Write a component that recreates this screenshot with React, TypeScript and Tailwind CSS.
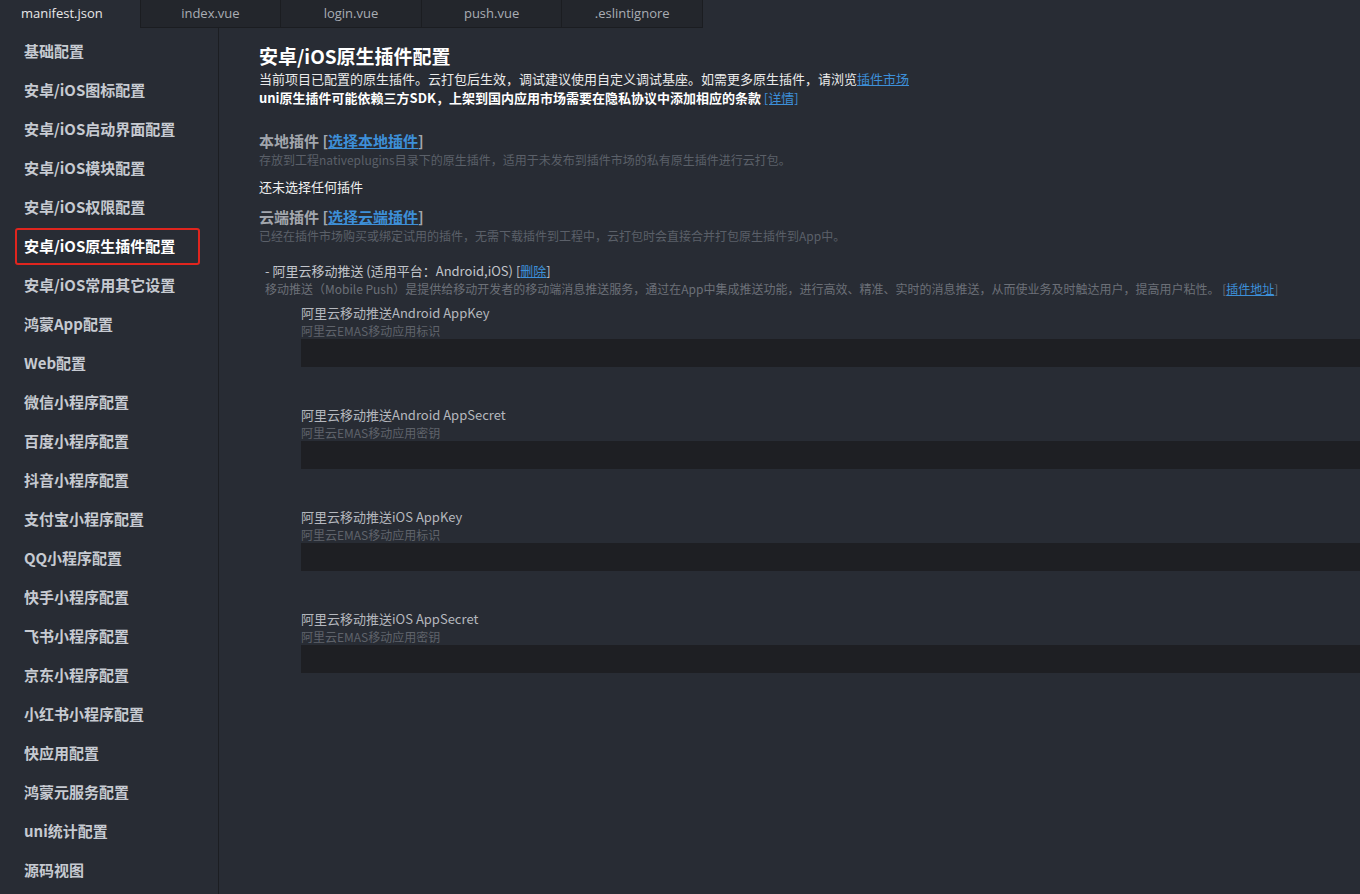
import React from 'react';

const tabs = ['manifest.json', 'index.vue', 'login.vue', 'push.vue', '.eslintignore'];

const menu = [
  '基础配置',
  '安卓/iOS图标配置',
  '安卓/iOS启动界面配置',
  '安卓/iOS模块配置',
  '安卓/iOS权限配置',
  '安卓/iOS原生插件配置',
  '安卓/iOS常用其它设置',
  '鸿蒙App配置',
  'Web配置',
  '微信小程序配置',
  '百度小程序配置',
  '抖音小程序配置',
  '支付宝小程序配置',
  'QQ小程序配置',
  '快手小程序配置',
  '飞书小程序配置',
  '京东小程序配置',
  '小红书小程序配置',
  '快应用配置',
  '鸿蒙元服务配置',
  'uni统计配置',
  '源码视图',
];

const fields = [
  { label: '阿里云移动推送Android AppKey', sub: '阿里云EMAS移动应用标识' },
  { label: '阿里云移动推送Android AppSecret', sub: '阿里云EMAS移动应用密钥' },
  { label: '阿里云移动推送iOS AppKey', sub: '阿里云EMAS移动应用标识' },
  { label: '阿里云移动推送iOS AppSecret', sub: '阿里云EMAS移动应用密钥' },
];

export default function App() {
  const active = 5;

  return (
    <div className="h-[894px] w-[1360px] overflow-hidden bg-[#282c34] flex flex-col font-['Open_Sans','Noto_Sans_CJK_SC',sans-serif]">
      {/* Tabs */}
      <div className="h-[28px] flex shrink-0">
        {tabs.map((t, i) => (
          <div
            key={t}
            className={`w-[140.6px] h-full flex items-center text-[13px] border-r border-[#1b1d21] ${
              i === 0 ? 'bg-[#282c34] text-[#e8e8e8] pl-[21px]' : 'bg-[#23262c] text-[#a9adb4] border-b justify-center'
            }`}
          >
            {t}
          </div>
        ))}
      </div>

      <div className="flex flex-1 min-h-0">
        {/* Sidebar */}
        <div className="w-[219px] shrink-0 border-r border-[#1c1e22] pt-[5px]">
          {menu.map((m, i) => (
            <div
              key={m}
              className={`mx-[15px] w-[185px] h-[37px] mb-[2px] flex items-center pl-[7px] rounded-[3px] border-2 text-[15px] font-bold font-['Noto_Sans_CJK_SC',sans-serif] ${
                i === active ? 'border-[#e0251e] text-white' : 'border-transparent text-[#c6cad1]'
              }`}
            >
              {m}
            </div>
          ))}
        </div>

        {/* Content */}
        <div className="flex-1 min-w-0 overflow-hidden pl-[40px] pt-[15px] font-['Noto_Sans_CJK_SC',sans-serif]">
          <h1 className="text-[19px] leading-[26px] font-bold text-white">安卓/iOS原生插件配置</h1>
          <p className="text-[13px] leading-[19px] text-[#eaeaea]">
            当前项目已配置的原生插件。云打包后生效，调试建议使用自定义调试基座。如需更多原生插件，请浏览
            <span className="text-[#3d8fd8] underline">插件市场</span>
          </p>
          <p className="text-[13px] leading-[19px] font-bold text-white">
            uni原生插件可能依赖三方SDK，上架到国内应用市场需要在隐私协议中添加相应的条款{' '}
            <span className="font-normal text-[#3d8fd8] underline">[详情]</span>
          </p>

          <div className="mt-[23px] text-[15px] leading-[21px] font-bold text-[#a2a6ad]">
            本地插件 [<span className="text-[#3d8fd8] underline">选择本地插件</span>]
          </div>
          <div className="text-[12px] leading-[17px] text-[#5b6069]">
            存放到工程nativeplugins目录下的原生插件，适用于未发布到插件市场的私有原生插件进行云打包。
          </div>

          <div className="mt-[9px] text-[13px] leading-[19px] text-[#f0f0f0]">还未选择任何插件</div>

          <div className="mt-[10px] text-[15px] leading-[21px] font-bold text-[#a2a6ad]">
            云端插件 [<span className="text-[#3d8fd8] underline">选择云端插件</span>]
          </div>
          <div className="text-[12px] leading-[17px] text-[#5b6069]">
            已经在插件市场购买或绑定试用的插件，无需下载插件到工程中，云打包时会直接合并打包原生插件到App中。
          </div>

          <div className="ml-[6px] mt-[17px]">
            <div className="text-[13px] leading-[19px] text-[#c2c5cb]">
              - 阿里云移动推送 (适用平台：Android,iOS) [<span className="text-[#3d8fd8] underline">删除</span>]
            </div>
            <div className="text-[12px] leading-[17px] text-[#6c7078] whitespace-nowrap">
              移动推送（Mobile Push）是提供给移动开发者的移动端消息推送服务，通过在App中集成推送功能，进行高效、精准、实时的消息推送，从而使业务及时触达用户，提高用户粘性。 [<span className="text-[#3d8fd8] underline">插件地址</span>]
            </div>

            <div className="ml-[36px] mt-[6px] flex flex-col gap-[38px]">
              {fields.map((f) => (
                <div key={f.label}>
                  <div className="text-[13px] leading-[19px] text-[#b5b8be]">{f.label}</div>
                  <div className="text-[12px] leading-[17px] text-[#5f636b]">{f.sub}</div>
                  <div className="h-[28px] w-[1100px] bg-[#1e1f23]" />
                </div>
              ))}
            </div>
          </div>
        </div>
      </div>
    </div>
  );
}
